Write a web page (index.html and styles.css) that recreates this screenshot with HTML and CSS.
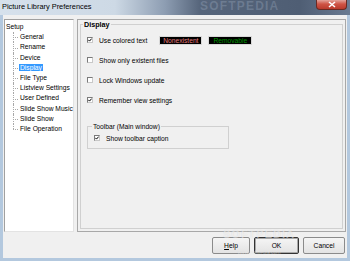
FILE: index.html
```html
<!DOCTYPE html>
<html lang="en">
<head>
    <meta charset="UTF-8">
    <title>Picture Library Preferences</title>
    <link rel="stylesheet" href="styles.css">
</head>
<body>

<div class="window">
    <div class="titlebar">
        <span class="title">Picture Library Preferences</span>
        <span class="watermark-top">SOFTPEDIA</span>
        <span class="close">
            <svg viewBox="0 0 8 7" width="8" height="7"><path d="M1 1 L7 6 M7 1 L1 6" stroke="#fff" stroke-width="1.6"/></svg>
        </span>
    </div>

    <div class="body">
        <div class="content">
            <div class="tree">
                <div class="root">Setup</div>
                <ul class="children">
                    <li><span>General</span></li>
                    <li><span>Rename</span></li>
                    <li><span>Device</span></li>
                    <li><span class="selected">Display</span></li>
                    <li><span>File Type</span></li>
                    <li><span>Listview Settings</span></li>
                    <li><span>User Defined</span></li>
                    <li><span>Slide Show Music</span></li>
                    <li><span>Slide Show</span></li>
                    <li><span>File Operation</span></li>
                </ul>
            </div>

            <div class="panel">
                <fieldset class="group main">
                    <legend>Display</legend>
                    <div class="rows">
                        <div class="check-row">
                            <span class="box"><svg viewBox="0 0 4 4"><path d="M0.3 1.8 L1.5 3.1 L3.7 0.6" fill="none" stroke="#000" stroke-width="1"/></svg></span>
                            Use colored text
                            <span class="sample nonexist">Nonexistent</span>
                            <span class="sample removable">Removable</span>
                        </div>
                        <div class="check-row">
                            <span class="box"></span>
                            Show only existent files
                        </div>
                        <div class="check-row">
                            <span class="box"></span>
                            Lock Windows update
                        </div>
                        <div class="check-row">
                            <span class="box"><svg viewBox="0 0 4 4"><path d="M0.3 1.8 L1.5 3.1 L3.7 0.6" fill="none" stroke="#000" stroke-width="1"/></svg></span>
                            Remember view settings
                        </div>
                    </div>

                    <fieldset class="group toolbar">
                        <legend>Toolbar (Main window)</legend>
                        <div class="check-row">
                            <span class="box"><svg viewBox="0 0 4 4"><path d="M0.3 1.8 L1.5 3.1 L3.7 0.6" fill="none" stroke="#000" stroke-width="1"/></svg></span>
                            Show toolbar caption
                        </div>
                    </fieldset>
                </fieldset>
            </div>
        </div>

        <div class="buttons">
            <button class="btn help"><u>H</u>elp</button>
            <button class="btn ok">OK</button>
            <button class="btn cancel">Cancel</button>
        </div>
    </div>

    <div class="watermark-bottom">SOFTPEDIA<small>www.softpedia.com</small></div>
</div>

</body>
</html>
```

FILE: styles.css
```css
body {
    margin: 0;
    font-family: "Liberation Sans", Arial, sans-serif;
    font-size: 6.7px;
    color: #000;
    background: #fff;
}
.window {
    position: relative;
    width: 350px;
    height: 261px;
    display: flex;
    flex-direction: column;
    overflow: hidden;
}

/* title bar */
.titlebar {
    position: relative;
    height: 15px;
    display: flex;
    align-items: flex-start;
    background: linear-gradient(90deg, #d6e1ec 0, #cdd9e5 115px, #8d9db2 165px, #56657b 200px, #4f5e74 300px, #6a7b92 350px);
}
.title {
    font-size: 7.4px;
    line-height: 8px;
    margin: 3px 0 0 2px;
}
.watermark-top {
    position: absolute;
    left: 200px;
    top: 0;
    font-size: 12px;
    line-height: 13px;
    font-weight: bold;
    letter-spacing: 1.2px;
    color: rgba(200, 215, 235, 0.22);
}
.close {
    margin-left: auto;
    margin-right: 3px;
    width: 31px;
    height: 10px;
    box-sizing: border-box;
    display: flex;
    align-items: center;
    justify-content: center;
    background: linear-gradient(#e3a49b, #cf5445 45%, #b93a2c);
    border: 1px solid #6b2a22;
    border-top: 0;
    border-radius: 0 0 4px 4px;
}

/* dialog body */
.body {
    flex: 1;
    display: flex;
    flex-direction: column;
    gap: 5px;
    background: #f0f0f0;
    border: 3px solid #b3c8de;
    border-top: 0;
    padding: 4px 1px;
}
.content {
    flex: 1;
    display: flex;
    gap: 3px;
    min-height: 0;
}

/* tree */
.tree {
    width: 70px;
    box-sizing: border-box;
    background: #fff;
    border: 1px solid;
    border-color: #a0a0a0 #e3e3e3 #e3e3e3 #a0a0a0;
    padding: 2px 0 0 1px;
    line-height: 10.2px;
    white-space: nowrap;
}
.children {
    list-style: none;
    margin: 0;
    padding-left: 14px;
}
.children li {
    position: relative;
}
.children li::before {
    content: "";
    position: absolute;
    left: -7px;
    top: 0;
    height: 100%;
    border-left: 1px dotted #a8a8a8;
}
.children li:last-child::before {
    height: 50%;
}
.children li::after {
    content: "";
    position: absolute;
    left: -7px;
    top: 50%;
    width: 5px;
    border-top: 1px dotted #a8a8a8;
}
.selected {
    background: #3399ff;
    color: #fff;
    padding: 0 1px;
    margin-left: -1px;
}

/* right panel */
.panel {
    flex: 1;
    display: flex;
    border: 1px solid #a8a8a8;
    min-width: 0;
}
.group {
    margin: 0;
    border: 1px solid #d0d0d0;
    min-width: 0;
}
.group legend {
    padding: 0 1px;
    line-height: 9px;
}
.main {
    flex: 1;
    margin: 0 2px 2px;
    padding: 0 2px;
}
.main > legend {
    font-weight: bold;
    font-size: 7.2px;
}
.rows {
    margin: 1px 0 0 4px;
}
.check-row {
    display: flex;
    align-items: center;
    height: 20px;
    white-space: nowrap;
}
.box {
    width: 6px;
    height: 6px;
    box-sizing: border-box;
    border: 1px solid;
    border-color: #7a7a7a #c8c8c8 #c8c8c8 #7a7a7a;
    background: #fff;
    margin-right: 6px;
    display: flex;
}
.box svg {
    width: 4px;
    height: 4px;
}
.sample {
    height: 9px;
    box-sizing: border-box;
    border: 1px solid #d8d8d8;
    background: #000;
    text-align: center;
    line-height: 7px;
}
.nonexist {
    width: 43px;
    margin-left: 12px;
    color: #e07c7c;
}
.removable {
    width: 44px;
    margin-left: 6px;
    color: #009400;
}
.toolbar {
    width: 142px;
    box-sizing: border-box;
    margin: 12px 0 0 4px;
    padding: 0 4px 3px;
}
.toolbar .check-row {
    height: 14px;
    margin-left: 2px;
}

/* buttons */
.buttons {
    display: flex;
    justify-content: flex-end;
    gap: 4px;
    height: 17px;
    padding-right: 1px;
}
.btn {
    height: 17px;
    padding: 0;
    font-family: inherit;
    font-size: 6.7px;
    color: #000;
    border: 1px solid #8b8b8b;
    border-radius: 2px;
    background: linear-gradient(#f5f5f5, #e3e3e3);
}
.help {
    width: 38px;
}
.ok {
    width: 45px;
    border-color: #333;
    box-shadow: inset 0 0 0 1px #a8a8a8;
}
.cancel {
    width: 42px;
}

.watermark-bottom {
    position: absolute;
    left: 223px;
    top: 229px;
    font-size: 11px;
    font-weight: bold;
    letter-spacing: 1px;
    line-height: 11px;
    color: rgba(255, 255, 255, 0.5);
    text-shadow: 0 0 1px rgba(0, 0, 0, 0.1);
    text-align: center;
}
.watermark-bottom small {
    display: block;
    margin-top: 9px;
    font-size: 5px;
    font-weight: normal;
    letter-spacing: 0;
    line-height: 6px;
}
```
